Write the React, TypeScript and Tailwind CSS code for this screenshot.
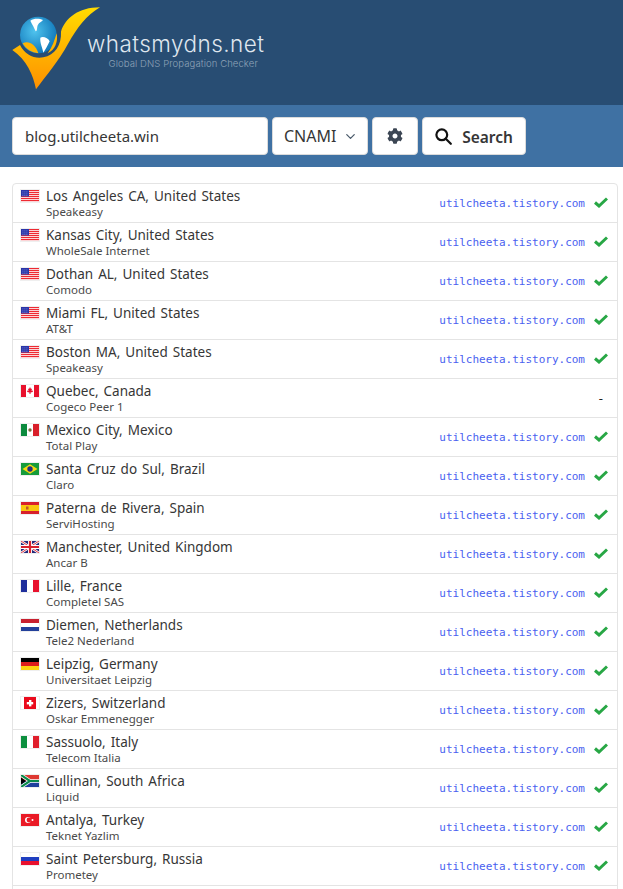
import { ChevronDown } from "lucide-react";
import { FaCog } from "react-icons/fa";
import React from "react";

const Flag = ({ c }: { c: string }) => {
  const common = { width: 18, height: 12, viewBox: "0 0 18 12", className: "block outline outline-1 outline-[#efefef]" };
  switch (c) {
    case "us":
      return (
        <svg {...common}>
          <rect width="18" height="12" fill="#fff" />
          {[0, 2, 4, 6, 8, 10].map((y) => (
            <rect key={y} y={y} width="18" height="1.2" fill="#ee2a32" />
          ))}
          <rect width="8" height="6.5" fill="#2a35a8" />
          {[1.5, 3.5, 5.5].map((x) =>
            [1.5, 3.5, 5].map((y) => <rect key={`${x}-${y}`} x={x} y={y} width="0.8" height="0.8" fill="#9aa3e6" />)
          )}
        </svg>
      );
    case "ca":
      return (
        <svg {...common}>
          <rect width="18" height="12" fill="#fff" />
          <rect width="5" height="12" fill="#e8112d" />
          <rect x="13" width="5" height="12" fill="#e8112d" />
          <path d="M9 2l1 2 1-.5-.5 2.5 1.5-.5-.3 1.5-2.2.5V9h-1V7.5L6.3 7 6 5.5l1.5.5L7 3.5 8 4z" fill="#e8112d" />
        </svg>
      );
    case "mx":
      return (
        <svg {...common}>
          <rect width="6" height="12" fill="#0c8a3e" />
          <rect x="6" width="6" height="12" fill="#fff" />
          <rect x="12" width="6" height="12" fill="#d81f2a" />
          <circle cx="9" cy="6" r="1.7" fill="#7a6a3a" />
        </svg>
      );
    case "br":
      return (
        <svg {...common}>
          <rect width="18" height="12" fill="#169b3b" />
          <path d="M9 1.2L16.5 6 9 10.8 1.5 6z" fill="#f8d90f" />
          <circle cx="9" cy="6" r="2.7" fill="#23307f" />
        </svg>
      );
    case "es":
      return (
        <svg {...common}>
          <rect width="18" height="12" fill="#d8202c" />
          <rect y="3" width="18" height="6" fill="#f9c80e" />
          <rect x="5" y="4.5" width="2.5" height="3" fill="#c0562a" />
        </svg>
      );
    case "gb":
      return (
        <svg {...common}>
          <rect width="18" height="12" fill="#23297a" />
          <path d="M0 0L18 12M18 0L0 12" stroke="#fff" strokeWidth="2.4" />
          <path d="M0 0L18 12M18 0L0 12" stroke="#d8202c" strokeWidth="0.9" />
          <path d="M9 0V12M0 6H18" stroke="#fff" strokeWidth="4" />
          <path d="M9 0V12M0 6H18" stroke="#d8202c" strokeWidth="2.2" />
        </svg>
      );
    case "fr":
      return (
        <svg {...common}>
          <rect width="6" height="12" fill="#1f2f9c" />
          <rect x="6" width="6" height="12" fill="#fff" />
          <rect x="12" width="6" height="12" fill="#e8112d" />
        </svg>
      );
    case "nl":
      return (
        <svg {...common}>
          <rect width="18" height="4" fill="#c8202f" />
          <rect y="4" width="18" height="4" fill="#fff" />
          <rect y="8" width="18" height="4" fill="#23409a" />
        </svg>
      );
    case "de":
      return (
        <svg {...common}>
          <rect width="18" height="4" fill="#000" />
          <rect y="4" width="18" height="4" fill="#dd1c1c" />
          <rect y="8" width="18" height="4" fill="#fcd20f" />
        </svg>
      );
    case "ch":
      return (
        <svg {...common}>
          <rect width="18" height="12" fill="#fff" />
          <rect x="3" width="12" height="12" fill="#ea0a1c" />
          <rect x="8" y="3" width="2.4" height="6.4" fill="#fff" />
          <rect x="5.8" y="5" width="6.4" height="2.4" fill="#fff" />
        </svg>
      );
    case "it":
      return (
        <svg {...common}>
          <rect width="6" height="12" fill="#0c8f3e" />
          <rect x="6" width="6" height="12" fill="#fff" />
          <rect x="12" width="6" height="12" fill="#e01f2c" />
        </svg>
      );
    case "za":
      return (
        <svg {...common}>
          <rect width="18" height="6" fill="#de3831" />
          <rect y="6" width="18" height="6" fill="#1f3f9c" />
          <path d="M0 0L9 6 0 12M9 6H18" stroke="#fff" strokeWidth="3.6" fill="none" />
          <path d="M0 0L9 6 0 12M9 6H18" stroke="#0a8a4a" strokeWidth="2.2" fill="none" />
          <path d="M0 2.5L5 6 0 9.5z" fill="#000" />
        </svg>
      );
    case "tr":
      return (
        <svg {...common}>
          <rect width="18" height="12" fill="#ea1a26" />
          <circle cx="7" cy="6" r="3" fill="#fff" />
          <circle cx="8" cy="6" r="2.4" fill="#ea1a26" />
          <circle cx="11.5" cy="6" r="1" fill="#fff" />
        </svg>
      );
    default:
      return (
        <svg {...common}>
          <rect width="18" height="4" fill="#fff" />
          <rect y="4" width="18" height="4" fill="#1f3fc0" />
          <rect y="8" width="18" height="4" fill="#e8112d" />
        </svg>
      );
  }
};

const rows: [string, string, string, boolean?][] = [
  ["us", "Los Angeles CA, United States", "Speakeasy"],
  ["us", "Kansas City, United States", "WholeSale Internet"],
  ["us", "Dothan AL, United States", "Comodo"],
  ["us", "Miami FL, United States", "AT&T"],
  ["us", "Boston MA, United States", "Speakeasy"],
  ["ca", "Quebec, Canada", "Cogeco Peer 1", true],
  ["mx", "Mexico City, Mexico", "Total Play"],
  ["br", "Santa Cruz do Sul, Brazil", "Claro"],
  ["es", "Paterna de Rivera, Spain", "ServiHosting"],
  ["gb", "Manchester, United Kingdom", "Ancar B"],
  ["fr", "Lille, France", "Completel SAS"],
  ["nl", "Diemen, Netherlands", "Tele2 Nederland"],
  ["de", "Leipzig, Germany", "Universitaet Leipzig"],
  ["ch", "Zizers, Switzerland", "Oskar Emmenegger"],
  ["it", "Sassuolo, Italy", "Telecom Italia"],
  ["za", "Cullinan, South Africa", "Liquid"],
  ["tr", "Antalya, Turkey", "Teknet Yazlim"],
  ["ru", "Saint Petersburg, Russia", "Prometey"],
];

const Logo = () => (
  <svg width="105" height="95" viewBox="0 0 315 285" className="block shrink-0">
    <defs>
      <linearGradient id="gold" x1="0" y1="0" x2="0" y2="1">
        <stop offset="0" stopColor="#ffdc00" />
        <stop offset="1" stopColor="#ff9000" />
      </linearGradient>
      <radialGradient id="sea" cx="0.4" cy="0.4" r="0.7">
        <stop offset="0" stopColor="#4fc3ee" />
        <stop offset="1" stopColor="#0a70b4" />
      </radialGradient>
    </defs>
    <path
      d="M22 150 L45 135 C60 165 90 178 115 172 C150 165 170 135 168 95 C180 55 220 22 285 22 C245 45 215 85 190 130 C160 185 125 225 93 268 C85 225 65 180 22 150Z"
      fill="url(#gold)"
    />
    <circle cx="100" cy="105" r="55" fill="url(#sea)" />
    <path
      d="M76 62 C88 54 104 56 114 60 C110 66 102 68 99 74 C95 80 98 92 92 94 C88 84 82 74 76 62Z M106 113 C114 108 130 114 134 124 C128 136 122 148 115 158 C113 144 104 128 106 113Z"
      fill="#fff"
    />
    <path d="M53 130 C70 122 90 130 100 160 C80 158 62 148 53 130Z" fill="#ffb400" />
    <path d="M128 160 C142 142 148 122 155 100 C160 125 150 150 128 160Z" fill="#ffb400" />
  </svg>
);

export default function App() {
  return (
    <div className="h-[889px] overflow-hidden bg-white font-['Noto_Sans','Open_Sans',sans-serif] text-[#363636]">
      <header className="h-[105px] bg-[#284d73] flex items-start pl-[5px]">
        <Logo />
        <div className="-ml-[23px] mt-[30px] flex flex-col items-center">
          <span className="font-['Inter',sans-serif] font-light text-[22.5px] leading-[28px] tracking-[0.45px] text-[#dfe6ee]">
            whatsmydns.net
          </span>
          <span className="font-['Inter',sans-serif] font-light text-[9.5px] leading-[11px] tracking-[0.1px] text-[#8fa3b8] pl-[15px]">
            Global DNS Propagation Checker
          </span>
        </div>
      </header>

      <div className="h-[62px] bg-[#3f71a3] flex items-start pt-3 pl-3 gap-[4px]">
        <div className="w-[256px] h-[38px] bg-white border border-[#dbdbdb] rounded flex items-center pl-3 text-[15px] text-[#363636]">
          blog.utilcheeta.win
        </div>
        <div className="w-[96px] h-[38px] bg-white border border-[#dbdbdb] rounded flex items-center justify-between pl-[11px] pr-[9px] text-[16px] text-[#363636]">
          CNAMI
          <ChevronDown size={15} strokeWidth={2} className="text-[#4a5a6a]" />
        </div>
        <div className="w-[46px] h-[38px] bg-white border border-[#dbdbdb] rounded flex items-center justify-center">
          <FaCog size={16} className="text-[#3c4654]" />
        </div>
        <div className="w-[104px] h-[38px] bg-white border border-[#dbdbdb] rounded flex items-center justify-center gap-[10px] text-[15.5px] leading-[24px] pt-px font-semibold text-[#363636]">
          <svg width="17" height="17" viewBox="0 0 17 17" fill="none" stroke="#111" strokeWidth="2.2" strokeLinecap="round">
            <circle cx="6.8" cy="6.8" r="5.4" />
            <path d="M10.8 10.8L15.8 15.8" />
          </svg>
          Search
        </div>
      </div>

      <div className="ml-3 mr-[5px] mt-4 border border-[#e4e4e4] rounded">
        {rows.map(([c, city, isp, dash]) => (
          <div key={city} className="h-[39px] border-b border-[#e4e4e4] flex items-start pl-[8px] pr-[9px]">
            <div className="w-[18px] mt-[6px] shrink-0">
              <Flag c={c} />
            </div>
            <div className="ml-[7px] mt-[4px] flex-1 min-w-0">
              <div className="text-[13.5px] leading-[17px] text-[#363636] [word-spacing:1.5px]">{city}</div>
              <div className="-mt-px text-[11.5px] leading-[15px] text-[#4a4a4a]">{isp}</div>
            </div>
            {dash ? (
              <span className="mt-[10px] mr-[5px] text-[13px] text-[#222]">-</span>
            ) : (
              <div className="mt-[12px] flex items-center gap-[9px]">
                <span className="font-['DejaVu_Sans_Mono',monospace] text-[11px] leading-[15px] text-[#4a5ff0]">
                  utilcheeta.tistory.com
                </span>
                <svg width="14" height="11" viewBox="0 0 14 11" fill="none" stroke="#28a745" strokeWidth="3" className="-mt-[2px]">
                  <path d="M1 5.5L5 9L13 1.5" />
                </svg>
              </div>
            )}
          </div>
        ))}
        <div className="h-[39px]" />
      </div>
    </div>
  );
}
